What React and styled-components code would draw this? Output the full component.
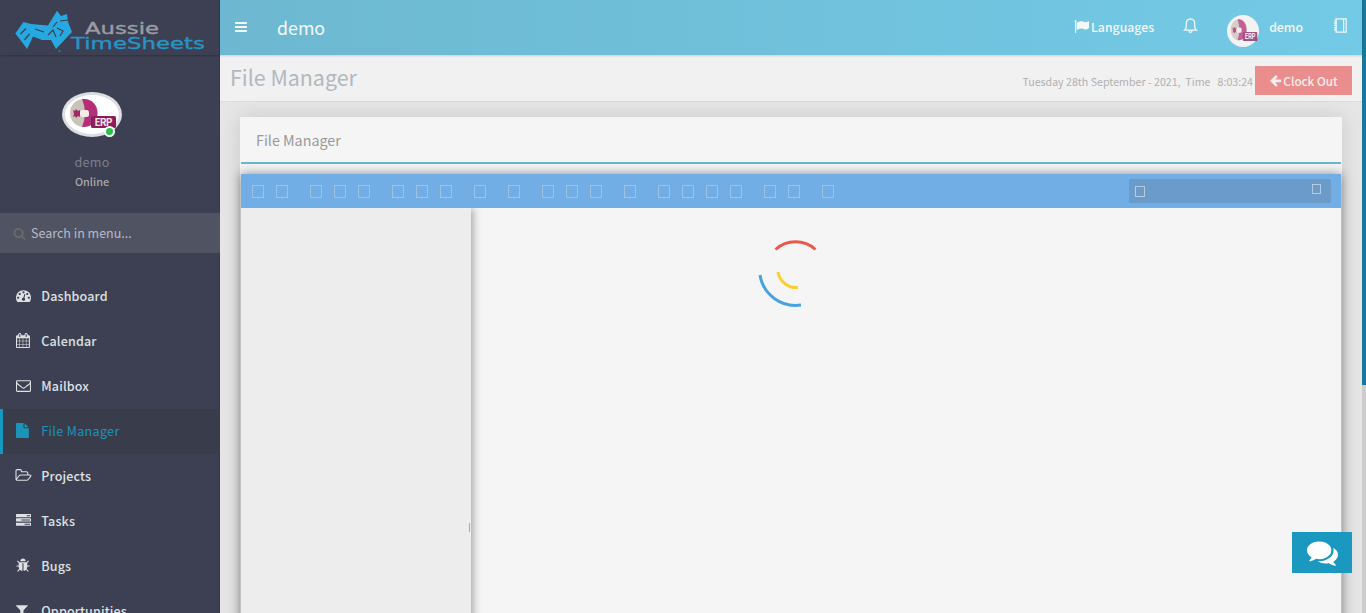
import React from "react";
import styled, { createGlobalStyle } from "styled-components";

const Global = createGlobalStyle`
  * { box-sizing: border-box; }
  html, body { margin: 0; height: 100%; overflow: hidden; }
  body { font-family: "Noto Sans CJK SC", "Noto Sans", sans-serif; }
  svg { display: block; overflow: visible; flex: none; }
`;

const ICONS = {
  bars: "M1664 1344v128q0 26-19 45t-45 19h-1408q-26 0-45-19t-19-45v-128q0-26 19-45t45-19h1408q26 0 45 19t19 45zm0-512v128q0 26-19 45t-45 19h-1408q-26 0-45-19t-19-45v-128q0-26 19-45t45-19h1408q26 0 45 19t19 45zm0-512v128q0 26-19 45t-45 19h-1408q-26 0-45-19t-19-45v-128q0-26 19-45t45-19h1408q26 0 45 19t19 45z",
  search: "M1216 832q0-185-131.5-316.5t-316.5-131.5-316.5 131.5-131.5 316.5 131.5 316.5 316.5 131.5 316.5-131.5 131.5-316.5zm512 832q0 52-38 90t-90 38q-54 0-90-38l-343-342q-179 124-399 124-143 0-273.5-55.5t-225-150-150-225-55.5-273.5 55.5-273.5 150-225 225-150 273.5-55.5 273.5 55.5 225 150 150 225 55.5 273.5q0 220-124 399l343 343q37 37 37 90z",
  dashboard: "M384 1152q0-53-37.5-90.5t-90.5-37.5-90.5 37.5-37.5 90.5 37.5 90.5 90.5 37.5 90.5-37.5 37.5-90.5zm192-448q0-53-37.5-90.5t-90.5-37.5-90.5 37.5-37.5 90.5 37.5 90.5 90.5 37.5 90.5-37.5 37.5-90.5zm428 481l101-382q6-26-7.5-48.5t-38.5-29.5-48 6.5-30 39.5l-101 382q-60 5-107 43.5t-63 98.5q-20 77 20 146t117 89 146-20 89-117q16-60-6-117t-72-91zm660-33q0-53-37.5-90.5t-90.5-37.5-90.5 37.5-37.5 90.5 37.5 90.5 90.5 37.5 90.5-37.5 37.5-90.5zm-640-640q0-53-37.5-90.5t-90.5-37.5-90.5 37.5-37.5 90.5 37.5 90.5 90.5 37.5 90.5-37.5 37.5-90.5zm448 192q0-53-37.5-90.5t-90.5-37.5-90.5 37.5-37.5 90.5 37.5 90.5 90.5 37.5 90.5-37.5 37.5-90.5zm320 448q0 261-141 483-19 29-54 29h-1402q-35 0-54-29-141-221-141-483 0-182 71-348t191-286 286-191 348-71 348 71 286 191 191 286 71 348z",
  calendar: "M192 1664h288v-288h-288v288zm352 0h320v-288h-320v288zm-352-352h288v-320h-288v320zm352 0h320v-320h-320v320zm-352-384h288v-288h-288v288zm736 736h320v-288h-320v288zm-384-736h320v-288h-320v288zm768 736h288v-288h-288v288zm-384-352h320v-320h-320v320zm-352-864v-288q0-13-9.5-22.5t-22.5-9.5h-64q-13 0-22.5 9.5t-9.5 22.5v288q0 13 9.5 22.5t22.5 9.5h64q13 0 22.5-9.5t9.5-22.5zm736 864h288v-320h-288v320zm-384-384h320v-288h-320v288zm384 0h288v-288h-288v288zm32-480v-288q0-13-9.5-22.5t-22.5-9.5h-64q-13 0-22.5 9.5t-9.5 22.5v288q0 13 9.5 22.5t22.5 9.5h64q13 0 22.5-9.5t9.5-22.5zm384-64v1280q0 52-38 90t-90 38h-1408q-52 0-90-38t-38-90v-1280q0-52 38-90t90-38h128v-96q0-66 47-113t113-47h64q66 0 113 47t47 113v96h384v-96q0-66 47-113t113-47h64q66 0 113 47t47 113v96h128q52 0 90 38t38 90z",
  envelope: "M1664 1504v-768q-32 36-69 66-268 206-426 338-51 43-83 67t-86.5 48.5-102.5 24.5h-2q-48 0-102.5-24.5t-86.5-48.5-83-67q-158-132-426-338-37-30-69-66v768q0 13 9.5 22.5t22.5 9.5h1472q13 0 22.5-9.5t9.5-22.5zm0-1051v-24.5l-.5-13-3-12.5-5.5-9-9-7.5-14-2.5h-1472q-13 0-22.5 9.5t-9.5 22.5q0 168 147 284 193 152 401 317 6 5 35 29.5t46 37.5 44.5 31.5 50.5 27.5 43 9h2q20 0 43-9t50.5-27.5 44.5-31.5 46-37.5 35-29.5q208-165 401-317 54-43 100.5-115.5t46.5-131.5zm128-37v1088q0 66-47 113t-113 47h-1472q-66 0-113-47t-47-113v-1088q0-66 47-113t113-47h1472q66 0 113 47t47 113z",
  file: "M1152 512v-472q22 14 36 28l408 408q14 14 28 36h-472zm-128 32q0 40 28 68t68 28h544v1056q0 40-28 68t-68 28h-1344q-40 0-68-28t-28-68v-1600q0-40 28-68t68-28h800v544z",
  folder: "M1717 931q0-35-53-35h-1088q-40 0-85.5 21.5t-71.5 52.5l-294 363q-18 24-18 40 0 35 53 35h1088q40 0 86-22t71-53l294-363q18-22 18-39zm-1141-163h768v-160q0-40-28-68t-68-28h-576q-40 0-68-28t-28-68v-64q0-40-28-68t-68-28h-320q-40 0-68 28t-28 68v853l256-315q44-53 116-87.5t140-34.5zm1269 163q0 62-46 120l-295 363q-43 53-116 87.5t-140 34.5h-1088q-92 0-158-66t-66-158v-960q0-92 66-158t158-66h320q92 0 158 66t66 158v32h544q92 0 158 66t66 158v160h192q54 0 99 24.5t67 70.5q15 32 15 68z",
  tasks: "M1024 1408h640v-128h-640v128zm-384-512h1024v-128h-1024v128zm640-512h384v-128h-384v128zm512 832v256q0 26-19 45t-45 19h-1664q-26 0-45-19t-19-45v-256q0-26 19-45t45-19h1664q26 0 45 19t19 45zm0-512v256q0 26-19 45t-45 19h-1664q-26 0-45-19t-19-45v-256q0-26 19-45t45-19h1664q26 0 45 19t19 45zm0-512v256q0 26-19 45t-45 19h-1664q-26 0-45-19t-19-45v-256q0-26 19-45t45-19h1664q26 0 45 19t19 45z",
  bug: "M1696 960q0 26-19 45t-45 19h-224q0 171-67 290l208 209q19 19 19 45t-19 45q-18 19-45 19t-45-19l-198-197q-5 5-15 13t-42 28.5-65 36.5-82 29-97 13v-896h-128v896q-51 0-101.5-13.5t-87-33-66-39-43.5-32.5l-15-14-183 207q-20 21-48 21-24 0-43-16-19-18-20.5-44.5t15.5-46.5l202-227q-58-114-58-274h-224q-26 0-45-19t-19-45 19-45 45-19h224v-294l-173-173q-19-19-19-45t19-45 45-19 45 19l173 173h844l173-173q19-19 45-19t45 19 19 45-19 45l-173 173v294h224q26 0 45 19t19 45zm-480-576h-640q0-133 93.5-226.5t226.5-93.5 226.5 93.5 93.5 226.5z",
  filter: "M1595 295q17 41-14 70l-493 493v742q0 42-39 59-13 5-25 5-27 0-45-19l-256-256q-19-19-19-45v-486l-493-493q-31-29-14-70 17-39 59-39h1280q42 0 59 39z",
  flag: "M320 256q0 72-64 110v1266q0 13-9.5 22.5t-22.5 9.5h-64q-13 0-22.5-9.5t-9.5-22.5v-1266q-64-38-64-110 0-53 37.5-90.5t90.5-37.5 90.5 37.5 37.5 90.5zm1472 64v763q0 25-12.5 38.5t-39.5 27.5q-215 116-369 116-61 0-123.5-22t-108.5-48-115.5-48-142.5-22q-192 0-464 146-17 9-33 9-26 0-45-19t-19-45v-742q0-32 31-55 21-14 79-43 236-120 421-120 107 0 200 29t219 88q38 19 88 19 54 0 117.5-21t110-47 88-47 54.5-21q26 0 45 19t19 45z",
  arrow: "M1664 896v128q0 53-32.5 90.5t-84.5 37.5h-704l293 294q38 36 38 90t-38 90l-75 76q-37 37-90 37-52 0-91-37l-651-652q-37-37-37-90 0-52 37-91l651-650q38-38 91-38 52 0 90 38l75 74q38 38 38 91t-38 91l-293 293h704q52 0 84.5 37.5t32.5 90.5z",
  comments: "M1408 768q0 139-94 257t-256.5 186.5-353.5 68.5q-86 0-176-16-124 88-278 128-36 9-86 16h-3q-11 0-20.5-8t-11.5-21q-1-3-1-6.5t.5-6.5 2-6l2.5-5 3.5-5.5 4-5 4.5-5 4-4.5q5-6 23-25t26-29.5 22.5-29 25-38.5 20.5-44q-124-72-195-177t-71-224q0-139 94-257t256.5-186.5 353.5-68.5 353.5 68.5 256.5 186.5 94 257zm384 256q0 120-71 224.5t-195 176.5q10 24 20.5 44t25 38.5 22.5 29 26 29.5 23 25q1 1 4 4.5t4.5 5 4 5 3.5 5.5l2.5 5 2 6 .5 6.5-1 6.5q-3 14-13 22t-22 7q-50-7-86-16-154-40-278-128-90 16-176 16-271 0-472-132 58 4 88 4 161 0 309-45t264-129q125-92 192-212t67-254q0-77-23-152 129 71 204 178t75 230z",
};
// Icons whose glyph starts one unit column in are shifted to sit flush left.
const Icon = ({ name, size = 15, shift = 0 }) => (
  <svg width={size} height={size} viewBox={`${shift} 0 1792 1792`} fill="currentColor">
    <path d={ICONS[name]} />
  </svg>
);

const Page = styled.div`
  display: flex;
  height: 613px;
  position: relative;
  overflow: hidden;
  background: #e6e6e6;
`;
const Sidebar = styled.aside`
  width: 220px;
  flex: none;
  background: #3c4052;
  box-shadow: inset -1px 0 0 #343748;
`;
const LogoBar = styled.div`
  height: 55px;
  padding: 10px 0 0 15px;
  box-shadow: 0 1px 2px rgba(0, 0, 0, 0.25);
`;
const UserPanel = styled.div`
  height: 158px;
  padding: 37px 36px 0 0;
  display: flex;
  flex-direction: column;
  align-items: center;
`;
const AvatarWrap = styled.div`
  position: relative;
  width: 60px;
  height: 45px;
`;
const StatusDot = styled.i`
  position: absolute;
  left: 42px;
  top: 34px;
  width: 11px;
  height: 11px;
  border-radius: 50%;
  border: 2px solid #fff;
  background: #27c24c;
`;
const UserName = styled.div`
  margin-top: 15px;
  font-size: 12.6px;
  letter-spacing: 0.25px;
  line-height: 20px;
  color: #7b7f8b;
`;
const UserState = styled.div`
  font-size: 10.8px;
  font-weight: 500;
  line-height: 18px;
  color: #a9a9a9;
`;
const SearchMenu = styled.div`
  height: 40px;
  display: flex;
  align-items: center;
  gap: 5px;
  padding-left: 13px;
  background: #4f5362;
  color: #b9bbc9;
  font-size: 12.5px;
  line-height: 20px;
  svg { color: #6b6a66; }
`;
const Nav = styled.nav`
  padding-top: 21px;
`;
const NavItem = styled.a`
  height: 45px;
  display: flex;
  align-items: center;
  padding: 0 0 2px ${(p) => (p.$active ? 12.5 : 15.5)}px;
  border-left: ${(p) => (p.$active ? "3px solid #1797be" : "0")};
  background: ${(p) => (p.$active ? "#393d4b" : "transparent")};
  color: ${(p) => (p.$active ? "#1c93b9" : "#dfe0e3")};
  font-size: 12.5px;
  font-weight: ${(p) => (p.$active ? 400 : 500)};
  letter-spacing: ${(p) => (p.$active ? 0.35 : 0.15)}px;
  line-height: 20px;
`;
const NavIcon = styled.span`
  width: 25.8px;
  flex: none;
`;

const Main = styled.main`
  flex: 1;
  min-width: 0;
  display: flex;
  flex-direction: column;
`;
const Header = styled.header`
  height: 55px;
  flex: none;
  display: flex;
  align-items: center;
  padding: 0 15px 2px 14px;
  background: linear-gradient(90deg, #6db8d0, #73cae6);
  box-shadow: 0 1px 2px rgba(0, 0, 0, 0.15);
  position: relative;
  color: #f4f7f8;
`;
const Brand = styled.div`
  margin-left: 29px;
  flex: 1;
  font-size: 17.8px;
  line-height: 28px;
`;
const HeaderText = styled.span`
  font-size: 12.3px;
  font-weight: 500;
  line-height: 20px;
  margin-left: ${(p) => p.$left}px;
`;
const HeaderIcon = styled.span`
  margin-left: ${(p) => p.$left}px;
  padding-bottom: 2px;
`;
const RoundAvatar = styled.span`
  margin: 8px 0 0 30px;
`;
const TitleBar = styled.div`
  height: 47px;
  flex: none;
  display: flex;
  padding: 0 10px;
  background: #f1f1f1;
  border-bottom: 1px solid #d9dde2;
`;
const Title = styled.h1`
  margin: 6px 0 0;
  flex: 1;
  font-size: 21.4px;
  font-weight: 400;
  line-height: 32px;
  color: #afb9be;
`;
const Clock = styled.div`
  margin: 17px 2px 0 0;
  font-size: 10.65px;
  line-height: 20px;
  white-space: pre;
  color: #b0b0b0;
`;
const ClockOut = styled.button`
  margin-top: 11px;
  width: 97px;
  height: 29px;
  padding: 0;
  border: 0;
  display: flex;
  align-items: center;
  justify-content: center;
  gap: 1px;
  background: #ea8e8d;
  color: #f5f0f0;
  font: 500 11.7px/20px "Noto Sans CJK SC", sans-serif;
`;
const Card = styled.section`
  margin: 15px 20px 0;
  height: 600px;
  flex: none;
  padding: 0 1px;
  background: #f5f5f5;
  box-shadow: 0 0 20px rgba(0, 0, 0, 0.13);
`;
const CardTitle = styled.h2`
  margin: 0;
  height: 47px;
  padding-left: 15px;
  border-bottom: 2px solid #6cb5cb;
  font-size: 14.3px;
  font-weight: 400;
  line-height: 46px;
  color: #999;
`;
const Manager = styled.div`
  margin-top: 10px;
  height: 560px;
  background: #f5f5f5;
  box-shadow: 0 0 10px rgba(0, 0, 0, 0.45);
`;
const Toolbar = styled.div`
  height: 34px;
  display: flex;
  align-items: center;
  justify-content: space-between;
  padding: 0 10px 0 11px;
  background: #70aee5;
`;
const Tools = styled.div`
  display: flex;
  gap: 22px;
`;
const ToolGroup = styled.div`
  display: flex;
  gap: 12px;
`;
const Glyph = styled.i`
  width: ${(p) => p.$w || 12}px;
  height: ${(p) => p.$h || 13}px;
  border: 1px solid ${(p) => p.$color || "#9bc4ea"};
  margin-bottom: ${(p) => p.$lift || 0}px;
`;
const FileSearch = styled.div`
  width: 202px;
  height: 24px;
  border-radius: 2px;
  display: flex;
  justify-content: space-between;
  align-items: center;
  padding: 1px 10px 0 6px;
  background: #6a9bc9;
`;
const Body = styled.div`
  display: flex;
  height: 526px;
`;
const Tree = styled.div`
  width: 230px;
  background: #ededed;
  box-shadow: 3px 0 8px -1px rgba(0, 0, 0, 0.35);
  clip-path: inset(0 -14px 0 0);
  padding-top: 315px;
`;
const Grip = styled.div`
  margin-left: 228px;
  width: 1px;
  height: 9px;
  background: #aaa;
`;
const Files = styled.div`
  flex: 1;
  padding: 30px 0 0 287px;
`;
const Scroll = styled.div`
  width: 4px;
  flex: none;
  background: #cdcdcd;
`;
const Thumb = styled.div`
  height: 385px;
  background: #19779b;
`;
const Chat = styled.button`
  position: absolute;
  left: 1292px;
  top: 532px;
  width: 60px;
  height: 41px;
  border: 0;
  padding: 0;
  display: flex;
  align-items: center;
  justify-content: center;
  background: #1b98c0;
  color: #fff;
`;

const Logo = () => (
  <svg width="192" height="43" viewBox="15 10 192 43">
    <g fill="#27a8e0">
      <path d="M15.3 33.5L23.500 22L31 24L48 25.500L57 10.8L61 16L67 14L68 22L72 32L56 49L51 40L42 40L33 36.500L31 41L27 49L22 42Z" />
      <circle cx="59.500" cy="51" r="1" opacity=".6" />
    </g>
    <g fill="none" stroke="#3c4052" strokeWidth="1.2">
      <path d="M20.500 34L26 28.500M24.500 40l5-6M35 29l9 3M48 35l5-5 3 7M57 22l-4 5M60 21l8-1M57 28l6 3-3 5" />
    </g>
    <g strokeWidth=".35">
      <text x="85" y="34.2" textLength="74" lengthAdjust="spacingAndGlyphs" fontFamily="DejaVu Sans" fontSize="15" fill="#9b9ca2" stroke="#9b9ca2">Aussie</text>
      <text x="71" y="48.800" textLength="134" lengthAdjust="spacingAndGlyphs" fontFamily="DejaVu Sans" fontSize="16.5" fill="#2794c8" stroke="#2794c8">TimeSheets</text>
    </g>
  </svg>
);

const ErpArt = () => (
  <>
    <ellipse cx="22" cy="21" rx="14" ry="14" fill="#c9c3ba" />
    <path d="M20 7C40 5 41 36 20 35Q26 21 20 7Z" fill="#b52f78" />
    <path d="M11 18l2 1 1-2 2 2 2-1v7l-2-1-2 2-1-2-2 1 1-3z" fill="#a92568" />
    <rect x="18" y="18" width="9" height="7" rx="2.5" fill="#f1ece8" />
    <rect x="29" y="24" width="25" height="12" rx="1.5" fill="#8c1d58" />
    <text x="32.5" y="34" textLength="18" fontFamily="Noto Sans CJK SC" fontSize="10" fontWeight="700" fill="#f4e3ec">ERP</text>
  </>
);

const NAV = [
  ["dashboard", "Dashboard"],
  ["calendar", "Calendar", 64],
  ["envelope", "Mailbox"],
  ["file", "File Manager", 128],
  ["folder", "Projects"],
  ["tasks", "Tasks"],
  ["bug", "Bugs", 64],
  ["filter", "Opportunities", 192],
];
const TOOL_GROUPS = [2, 3, 3, 1, 1, 3, 1, 4, 2, 1];

export default function App() {
  return (
    <>
      <Global />
      <Page>
        <Sidebar>
          <LogoBar><Logo /></LogoBar>
          <UserPanel>
            <AvatarWrap>
              <svg width="60" height="45" viewBox="0 0 60 45">
                <ellipse cx="30" cy="22.5" rx="30" ry="22.5" fill="#dcdde1" />
                <ellipse cx="30" cy="22.5" rx="27" ry="19.5" fill="#fff" />
                <ErpArt />
              </svg>
              <StatusDot />
            </AvatarWrap>
            <UserName>demo</UserName>
            <UserState>Online</UserState>
          </UserPanel>
          <SearchMenu><Icon name="search" size={13} />Search in menu...</SearchMenu>
          <Nav>
            {NAV.map(([icon, label, shift]) => (
              <NavItem key={label} $active={icon === "file"}>
                <NavIcon><Icon name={icon} shift={shift} /></NavIcon>
                {label}
              </NavItem>
            ))}
          </Nav>
        </Sidebar>
        <Main>
          <Header>
            <Icon name="bars" size={14} />
            <Brand>demo</Brand>
            <Icon name="flag" size={15} />
            <HeaderText $left={2}>Languages</HeaderText>
            <HeaderIcon $left={30}>
              <svg width="13" height="15" viewBox="0 0 13 15" fill="none" stroke="currentColor" strokeWidth="1.3">
                <path d="M.6 12.2H12.4Q10.7 10.8 10.7 8.5V5.3Q10.7 1.2 6.5 1.2T2.3 5.3V8.5Q2.3 10.8 .6 12.2ZM5 12.7q0 1.6 1.5 1.6T8 12.7M6.5 0v1" />
              </svg>
            </HeaderIcon>
            <RoundAvatar>
              <svg width="32" height="32" viewBox="0 0 32 32">
                <circle cx="16" cy="16" r="16" fill="#f3f3f3" />
                <g transform="translate(-1 -1) scale(.58 .75)" opacity=".75"><ErpArt /></g>
              </svg>
            </RoundAvatar>
            <HeaderText $left={10}>demo</HeaderText>
            <HeaderIcon $left={31}>
              <svg width="13" height="15" viewBox="0 0 13 15" fill="none" stroke="currentColor" strokeWidth="1.2">
                <path d="M2 .8H12.2V14.2H2ZM9.6 .8V14.2M0 3h3M0 5.2h3M0 7.4h3M0 9.6h3M0 11.8h3" />
              </svg>
            </HeaderIcon>
          </Header>
          <TitleBar>
            <Title>File Manager</Title>
            <Clock>{"Tuesday 28th September - 2021,  Time   8:03:24"}</Clock>
            <ClockOut><Icon name="arrow" size={13} />Clock Out</ClockOut>
          </TitleBar>
          <Card>
            <CardTitle>File Manager</CardTitle>
            <Manager>
              <Toolbar>
                <Tools>
                  {TOOL_GROUPS.map((count, g) => (
                    <ToolGroup key={g}>
                      {Array.from({ length: count }, (_, i) => <Glyph key={i} />)}
                    </ToolGroup>
                  ))}
                </Tools>
                <FileSearch>
                  <Glyph $w={10} $h={11} $color="#b4cbe2" />
                  <Glyph $w={9} $h={10} $lift={5} $color="#b4cbe2" />
                </FileSearch>
              </Toolbar>
              <Body>
                <Tree><Grip /></Tree>
                <Files>
                  <svg width="74" height="74" viewBox="0 0 74 74" fill="none" strokeWidth="3">
                    <path d="M17.500 11.500A30 30 0 0 1 57.500 11.500" stroke="#ea5a4b" />
                    <path d="M2 37A36 36 0 0 0 43 67" stroke="#47a2e0" />
                    <path d="M20 34A18.500 18.500 0 0 0 40 49.500" stroke="#fad02f" />
                  </svg>
                </Files>
              </Body>
            </Manager>
          </Card>
        </Main>
        <Scroll><Thumb /></Scroll>
        <Chat><Icon name="comments" size={31} /></Chat>
      </Page>
    </>
  );
}
